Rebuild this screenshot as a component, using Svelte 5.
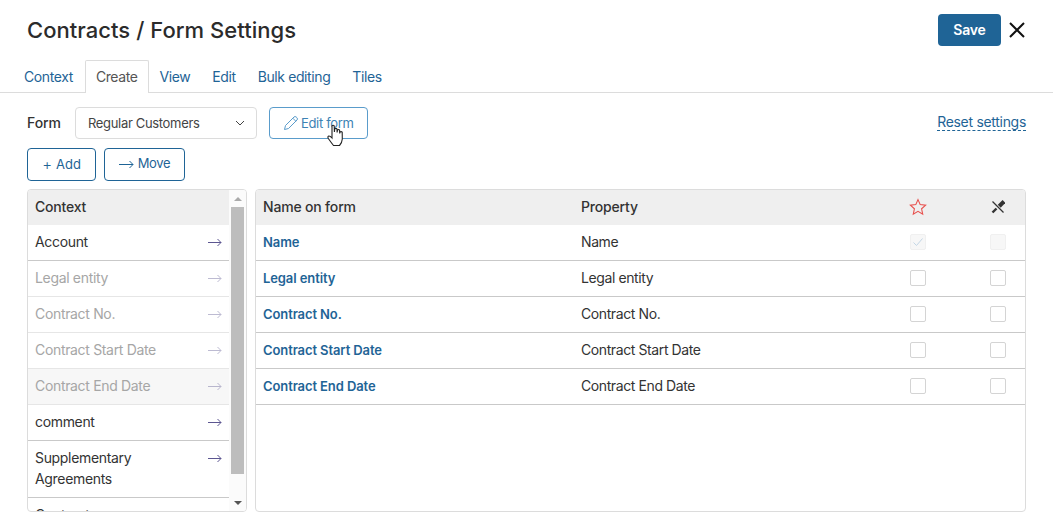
<script>
  const tabs = ['Context', 'Create', 'View', 'Edit', 'Bulk editing', 'Tiles'];
  const ctx = [
    { t: 'Account' },
    { t: 'Legal entity', off: true },
    { t: 'Contract No.', off: true },
    { t: 'Contract Start Date', off: true },
    { t: 'Contract End Date', off: true, hover: true },
    { t: 'comment' },
    { t: 'Supplementary Agreements', tall: true }
  ];
  const rows = ['Name', 'Legal entity', 'Contract No.', 'Contract Start Date', 'Contract End Date'];
</script>

<div class="page">
  <header class="head">
    <h1>Contracts / Form Settings</h1>
    <div class="actions">
      <button class="save">Save</button>
      <svg class="close" width="18" height="18" viewBox="0 0 18 18"><path d="M2 2 L16 16 M16 2 L2 16" stroke="#111" stroke-width="2" fill="none"/></svg>
    </div>
  </header>

  <nav class="tabs">
    {#each tabs as t}
      <span class="tab" class:active={t === 'Create'}>{t}</span>
    {/each}
  </nav>

  <div class="formrow">
    <span class="formlabel">Form</span>
    <div class="select">
      <span>Regular Customers</span>
      <svg width="10" height="6" viewBox="0 0 10 6"><path d="M1 1 L5 5 L9 1" stroke="#444" stroke-width="1" fill="none"/></svg>
    </div>
    <div class="edit">
      <svg width="16" height="16" viewBox="0 0 16 16" fill="none" stroke="#5a9ccb" stroke-width="1"><path d="M1.5 14.5 L2.5 10.5 L11 2 Q12 1 13.2 2 L14 2.8 Q15 4 14 5 L5.5 13.5 Z M9.8 3.2 L12.8 6.2"/></svg>
      <span>Edit form</span>
      <svg class="hand" width="17" height="23" viewBox="0 0 17 23"><path d="M5 1.8 Q6.2 .6 7.2 1.8 L7.4 8 L7.8 4.8 Q9 3.8 10 5 L10.1 8.5 L10.5 6 Q11.6 5 12.6 6.2 L12.7 9.5 L13 8 Q14.2 7 15.2 8.2 L15.3 15 Q15 19 12.5 21.5 L6.5 21.5 Q4.5 19 1.3 14.5 Q.3 12.6 1.8 12 Q3 11.8 5 14 Z" fill="#fff" stroke="#222" stroke-width="1.1"/></svg>
    </div>
    <span class="reset">Reset settings</span>
  </div>

  <div class="btnrow">
    <div class="outline add"><span class="sign">+</span> Add</div>
    <div class="outline move">
      <svg width="15" height="9" viewBox="0 0 15 9" fill="none" stroke="#1e6496" stroke-width="1"><path d="M0 4.5 H14 M10.5 1 L14 4.5 L10.5 8"/></svg>
      <span class="mv">Move</span>
    </div>
  </div>

  <div class="panels">
    <section class="left">
      <div class="list">
        <div class="lhead">Context</div>
        {#each ctx as c}
          <div class="item" class:off={c.off} class:hover={c.hover} class:tall={c.tall}>
            <span class="itext">{c.t}</span>
            <svg width="14" height="9" viewBox="0 0 14 9" fill="none" stroke="#5c5691" stroke-width="1"><path d="M0 4.5 H13 M9.5 1 L13 4.5 L9.5 8"/></svg>
          </div>
        {/each}
        <div class="item"><span class="itext">Contracts</span></div>
      </div>
      <div class="scroll">
        <span class="up"></span>
        <div class="track"><div class="thumb"></div></div>
        <span class="down"></span>
      </div>
    </section>

    <section class="right">
      <div class="grid ghead">
        <span>Name on form</span>
        <span>Property</span>
        <span class="ic">
          <svg width="18" height="18" viewBox="0 0 18 18"><path d="M9 1.6 L11.2 6.6 L16.6 7.2 L12.6 10.8 L13.7 16.2 L9 13.4 L4.3 16.2 L5.4 10.8 L1.4 7.2 L6.8 6.6 Z" fill="none" stroke="#e8504d" stroke-width="1.1"/></svg>
        </span>
        <span class="ic">
          <svg width="14" height="14" viewBox="0 0 14 14" fill="none" stroke="#333"><path d="M13 1.5 L8 6.5" stroke-width="4"/><path d="M5.5 8.5 L1.5 12.5" stroke-width="2.4"/><path d="M1.5 1.5 L12.5 12.5" stroke="#eee" stroke-width="2.6"/><path d="M1.5 1.5 L12.5 12.5" stroke-width="1.3"/></svg>
        </span>
      </div>
      {#each rows as r, i}
        <div class="grid grow">
          <span class="link">{r}</span>
          <span class="prop">{r}</span>
          <span class="ic"><span class="cb" class:dis={i === 0}>
            {#if i === 0}<svg width="14" height="14" viewBox="0 0 14 14" fill="none" stroke="#c3d6e6" stroke-width="1"><path d="M2.5 7.5 L5.5 10.5 L11.5 3.5"/></svg>{/if}
          </span></span>
          <span class="ic"><span class="cb" class:dis={i === 0}></span></span>
        </div>
      {/each}
    </section>
  </div>
</div>

<style>
  :global(body) { margin: 0; background: #fff; }
  .page {
    width: 1053px; height: 525px; overflow: hidden; box-sizing: border-box;
    font-family: Inter, "Noto Sans", sans-serif; font-size: 14px; color: #333; letter-spacing: -0.33px;
  }
  .head {
    height: 60px; box-sizing: border-box; padding: 14px 27px 0 27px;
    display: flex; justify-content: space-between; align-items: flex-start;
  }
  h1 { margin: 0; font-size: 22px; font-weight: 500; line-height: 32px; color: #2b2b2b; letter-spacing: 0.04px; }
  .actions { display: flex; align-items: center; gap: 7px; }
  .save {
    width: 63px; height: 32px; border: 0; border-radius: 4px; background: #1f6496; color: #fff;
    font: 600 14px Inter, sans-serif; letter-spacing: -0.2px; padding: 0 0 2px;
  }
  .close { display: block; }
  .tabs {
    height: 33px; box-sizing: border-box; border-bottom: 1px solid #dcdcdc;
    display: flex; padding-left: 13px;
  }
  .tab {
    height: 32px; line-height: 31px; padding: 0 10px; color: #1f6496; box-sizing: border-box;
    border: 1px solid transparent; border-bottom: 0; letter-spacing: -0.4px;
  }
  .tab.active {
    height: 33px; color: #555; background: #fff; border-color: #dcdcdc; border-radius: 2px 2px 0 0;
    margin: 0 0 0 1px;
  }
  .formrow {
    margin-top: 14px; height: 32px; padding: 0 27px; display: flex; align-items: center;
  }
  .formlabel { font-weight: 500; width: 48px; padding-bottom: 2px; letter-spacing: -0.1px; }
  .select {
    width: 182px; height: 32px; box-sizing: border-box; border: 1px solid #dcdcdc; border-radius: 4px;
    display: flex; align-items: center; justify-content: space-between; padding: 0 11px 0 12px; font-size: 13px; color: #444;
  }
  .edit {
    position: relative; margin-left: 12px; width: 99px; height: 32px; box-sizing: border-box;
    border: 1px solid #5a9ccb; border-radius: 4px; color: #3d82b4; font-size: 13px;
    display: flex; align-items: center; padding-left: 13px; gap: 2px;
  }
  .hand { position: absolute; left: 57px; top: 16px; }
  .reset {
    margin-left: auto; color: #1f6496; line-height: 16px; border-bottom: 1px dashed #1f6496; margin-bottom: 2px; letter-spacing: -0.3px;
  }
  .btnrow { margin-top: 9px; padding: 0 27px; display: flex; gap: 8px; }
  .outline {
    height: 33px; box-sizing: border-box; border: 1px solid #1f6496; border-radius: 4px; color: #1f6496;
    display: flex; align-items: center; justify-content: center; font-size: 13px; gap: 4px; padding-bottom: 1px;
  }
  .add { width: 69px; letter-spacing: 0; }
  .move { width: 81px; }
  .mv { padding-bottom: 2px; }
  .sign { font-size: 15px; font-weight: 300; }
  .panels { margin-top: 8px; padding: 0 27px; display: flex; gap: 8px; height: 323px; }
  .left {
    width: 220px; box-sizing: border-box; border: 1px solid #dcdcdc; border-radius: 4px; display: flex; overflow: hidden;
  }
  .list { width: 201px; flex: none; overflow: hidden; }
  .lhead {
    height: 35px; line-height: 33px; padding-left: 7px; background: #efefef; font-weight: 500; color: #333; letter-spacing: -0.2px;
  }
  .item {
    min-height: 36px; box-sizing: border-box; border-bottom: 1px solid #c9c9c9; padding: 6px 7px 0 7px;
    display: flex; justify-content: space-between; align-items: flex-start; line-height: 21px;
  }
  .item svg { margin-top: 7px; flex: none; }
  .item.off { color: #a6a6a6; border-bottom-color: #e6e6e6; }
  .item.off svg { opacity: .4; }
  .item.hover { background: #f7f7f7; }
  .item.tall { height: 57px; }
  .itext { max-width: 140px; }
  .scroll { flex: 1; display: flex; flex-direction: column; align-items: center; background: #fbfbfb; padding: 0 2px; }
  .up, .down { width: 0; height: 0; border-left: 4px solid transparent; border-right: 4px solid transparent; margin: 7px 0 6px; }
  .up { border-bottom: 4px solid #aaa; }
  .down { border-top: 4px solid #555; margin: 5px 0 6px; }
  .track { flex: 1; width: 13px; }
  .thumb { height: 267px; background: #bdbdbd; }
  .right { flex: 1; box-sizing: border-box; border: 1px solid #dcdcdc; border-radius: 4px; overflow: hidden; }
  .grid { display: grid; grid-template-columns: 318px 1fr 106px 54px; align-items: center; padding-left: 7px; box-sizing: border-box; }
  .ghead { height: 35px; background: #efefef; font-weight: 500; padding-bottom: 2px; letter-spacing: -0.18px; }
  .grow { height: 36px; border-bottom: 1px solid #c9c9c9; padding-bottom: 1px; }
  .prop { padding-bottom: 2px; letter-spacing: -0.4px; }
  .link { color: #1f6496; font-weight: 600; font-size: 13px; letter-spacing: -0.1px; }
  .ic { display: flex; justify-content: center; }
  .cb {
    width: 16px; height: 16px; box-sizing: border-box; border: 1px solid #d4d4d4; border-radius: 2px; background: #fff;
    display: flex; align-items: center; justify-content: center;
  }
  .cb.dis { background: #f7f7f7; border-color: #f0f0f0; }
</style>
